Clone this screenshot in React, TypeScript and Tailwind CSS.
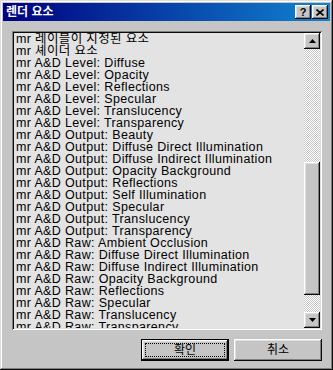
const items = [
  'mr 레이블이 지정된 요소',
  'mr 셰이더 요소',
  'mr A&D Level: Diffuse',
  'mr A&D Level: Opacity',
  'mr A&D Level: Reflections',
  'mr A&D Level: Specular',
  'mr A&D Level: Translucency',
  'mr A&D Level: Transparency',
  'mr A&D Output: Beauty',
  'mr A&D Output: Diffuse Direct Illumination',
  'mr A&D Output: Diffuse Indirect Illumination',
  'mr A&D Output: Opacity Background',
  'mr A&D Output: Reflections',
  'mr A&D Output: Self Illumination',
  'mr A&D Output: Specular',
  'mr A&D Output: Translucency',
  'mr A&D Output: Transparency',
  'mr A&D Raw: Ambient Occlusion',
  'mr A&D Raw: Diffuse Direct Illumination',
  'mr A&D Raw: Diffuse Indirect Illumination',
  'mr A&D Raw: Opacity Background',
  'mr A&D Raw: Reflections',
  'mr A&D Raw: Specular',
  'mr A&D Raw: Translucency',
  'mr A&D Raw: Transparency',
];

const raised =
  'shadow-[inset_-1px_-1px_#0a0a0a,inset_1px_1px_#ffffff,inset_-2px_-2px_#808080,inset_2px_2px_#dfdfdf]';

const font = "font-['Liberation_Sans','Noto_Sans_CJK_KR',sans-serif]";

const Arrow = ({ up }: { up?: boolean }) => (
  <svg width="7" height="4" viewBox="0 0 7 4">
    {up ? <polygon points="3.5,0 7,4 0,4" fill="#000" /> : <polygon points="0,0 7,0 3.5,4" fill="#000" />}
  </svg>
);

const App = () => {
  return (
    <div className={`w-[333px] h-[370px] bg-[#c5c5c5] p-[3px] flex flex-col ${font} shadow-[inset_-1px_-1px_#0a0a0a,inset_1px_1px_#dfdfdf,inset_-2px_-2px_#808080,inset_2px_2px_#ffffff]`}>
      {/* title bar */}
      <div className="h-[18px] flex items-center justify-between pl-[3px] pr-[2px] bg-[linear-gradient(90deg,#000080,#1084d0)]">
        <span className="text-white text-[12px] font-bold leading-none">렌더 요소</span>
        <div className="flex gap-[1px]">
          <div className={`w-[16px] h-[14px] bg-[#c5c5c5] ${raised} flex items-center justify-center text-[11px] font-bold leading-none text-black`}>
            ?
          </div>
          <div className={`w-[16px] h-[14px] bg-[#c5c5c5] ${raised} flex items-center justify-center`}>
            <svg width="8" height="7" viewBox="0 0 8 7">
              <path d="M0.5 0.5 L7.5 6.5 M7.5 0.5 L0.5 6.5" stroke="#000" strokeWidth="1.6" />
            </svg>
          </div>
        </div>
      </div>

      {/* list box */}
      <div className="ml-[9px] mr-[8px] mt-[10px] h-[299px] p-[2px] bg-[#e3e3e3] flex shadow-[inset_1px_1px_#808080,inset_-1px_-1px_#ffffff,inset_2px_2px_#0a0a0a,inset_-2px_-2px_#dfdfdf]">
        <div className="flex-1 overflow-hidden pl-[2px]">
          {items.map((item, i) => (
            <div key={i} className="h-[12px] leading-[12px] text-[12.5px] tracking-[0.35px] text-black whitespace-nowrap">
              {item}
            </div>
          ))}
        </div>
        <div className="w-[16px] flex flex-col bg-[repeating-conic-gradient(#c5c5c5_0_25%,#ffffff_0_50%)] bg-[length:2px_2px]">
          <div className={`h-[16px] bg-[#c5c5c5] ${raised} flex items-center justify-center`}>
            <Arrow up />
          </div>
          <div className="h-[113px]" />
          <div className={`h-[133px] bg-[#c5c5c5] ${raised}`} />
          <div className="flex-1" />
          <div className={`h-[16px] bg-[#c5c5c5] ${raised} flex items-center justify-center`}>
            <Arrow />
          </div>
        </div>
      </div>

      {/* buttons */}
      <div className="mt-[9px] mr-[8px] flex justify-end gap-[5px]">
        <div className="w-[88px] h-[22px] border border-black bg-[#c5c5c5]">
          <div className={`w-full h-full p-[3px] ${raised}`}>
            <div className="w-full h-full border border-dotted border-black flex items-center justify-center text-[12px] text-black leading-none">
              확인
            </div>
          </div>
        </div>
        <div className={`w-[88px] h-[22px] bg-[#c5c5c5] ${raised} flex items-center justify-center text-[12px] text-black leading-none`}>
          취소
        </div>
      </div>
    </div>
  );
};

export default App;
